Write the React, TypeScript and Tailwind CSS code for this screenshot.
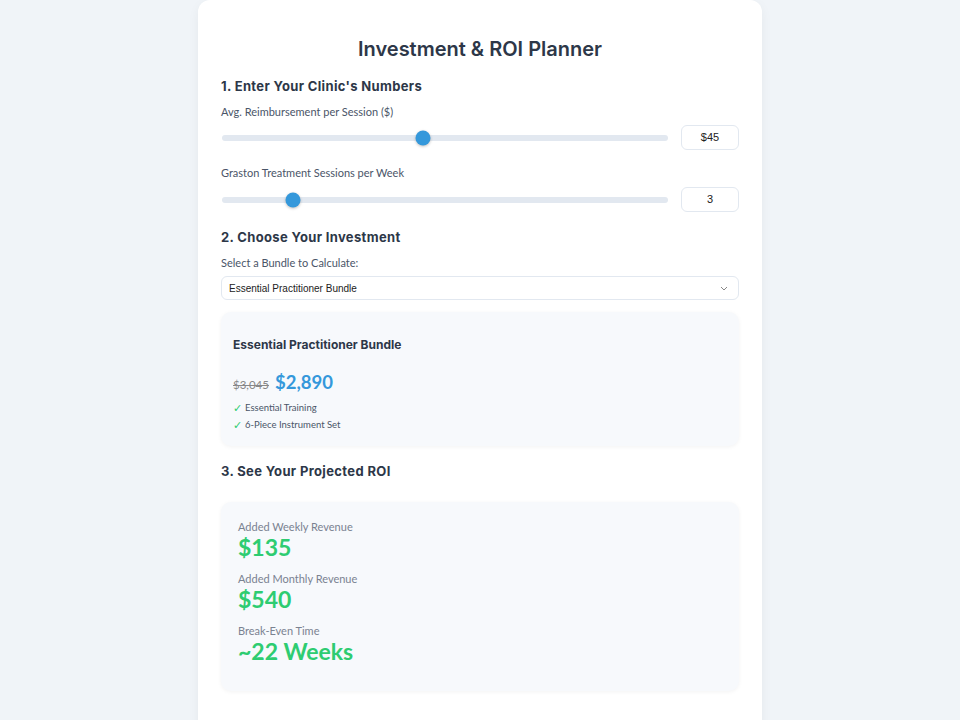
const head = { fontFamily: "Inter, 'Open Sans', sans-serif" };
const body = { fontFamily: "Lato, 'Noto Sans', sans-serif" };
const arial = { fontFamily: "'Liberation Sans', Arial, sans-serif" };

const Slider = ({ pct, value }: { pct: number; value: string }) => (
  <div className="flex items-center gap-[13px]">
    <div className="relative flex-1 h-[6px] rounded-full bg-[#e2e8f0] ml-px">
      <div
        className="absolute top-1/2 w-[15px] h-[15px] -translate-x-1/2 -translate-y-1/2 rounded-full bg-[#3498db] shadow-[0_1px_3px_rgba(0,0,0,0.25)]"
        style={{ left: `${pct}%` }}
      />
    </div>
    <div
      className="w-[58px] h-[25px] flex items-center justify-center border border-[#e2e8f0] rounded-[6px] text-[11px] text-[#222]"
      style={arial}
    >
      {value}
    </div>
  </div>
);

const Check = ({ children }: { children: string }) => (
  <div className="flex items-center gap-[4px] h-[17px] text-[9.5px] text-[#4a5568]">
    <span className="text-[#2ecc71] text-[11px] w-[8px]">✓</span>
    <span>{children}</span>
  </div>
);

const Stat = ({ label, value }: { label: string; value: string }) => (
  <div>
    <div className="text-[11px] leading-[16px] text-[#7a8291]">{label}</div>
    <div className="text-[23px] leading-[24px] font-bold text-[#2ecc71]">{value}</div>
  </div>
);

export default function App() {
  return (
    <div className="min-h-[720px] bg-[#f0f4f8] flex justify-center" style={body}>
      <div className="w-[564px] bg-white rounded-t-[12px] shadow-[0_4px_12px_rgba(0,0,0,0.05)] px-[23px] pt-[35px] pb-[40px]">
        <h1 className="text-center text-[20px] leading-[28px] font-semibold text-[#2d3748]" style={head}>
          Investment &amp; ROI Planner
        </h1>

        <h2 className="mt-[14px] text-[13px] leading-[18px] font-bold tracking-[0.35px] text-[#2d3748]" style={head}>
          1. Enter Your Clinic's Numbers
        </h2>
        <div className="mt-[9px] text-[11px] leading-[16px] text-[#4a5568]">Avg. Reimbursement per Session ($)</div>
        <div className="mt-[5px]">
          <Slider pct={45} value="$45" />
        </div>
        <div className="mt-[15px] text-[11px] leading-[16px] text-[#4a5568]">Graston Treatment Sessions per Week</div>
        <div className="mt-[6px]">
          <Slider pct={16} value="3" />
        </div>

        <h2 className="mt-[16px] text-[13px] leading-[18px] font-bold tracking-[0.35px] text-[#2d3748]" style={head}>
          2. Choose Your Investment
        </h2>
        <div className="mt-[9px] text-[11px] leading-[16px] text-[#4a5568]">Select a Bundle to Calculate:</div>
        <div
          className="mt-[5px] h-[24px] flex items-center justify-between border border-[#e2e8f0] rounded-[6px] pl-[7px] pr-[10px] text-[10px] text-[#222]"
          style={arial}
        >
          <span>Essential Practitioner Bundle</span>
          <svg width="8" height="5" viewBox="0 0 8 5" fill="none" stroke="#888" strokeWidth="1">
            <path d="M1 1l3 3 3-3" />
          </svg>
        </div>

        <div className="mt-[12px] bg-[#f7f9fc] rounded-[10px] shadow-[0_1px_4px_rgba(0,0,0,0.05)] px-[12px] pt-[25px] pb-[12px]">
          <div className="text-[12px] leading-[16px] font-bold text-[#2d3748]" style={head}>
            Essential Practitioner Bundle
          </div>
          <div className="mt-[16px] flex items-baseline gap-[6px] h-[24px]">
            <span className="text-[11.5px] text-[#888] line-through">$3,045</span>
            <span className="text-[18.5px] font-bold text-[#3498db]">$2,890</span>
          </div>
          <div className="mt-[7px]">
            <Check>Essential Training</Check>
            <Check>6-Piece Instrument Set</Check>
          </div>
        </div>

        <h2 className="mt-[16px] text-[13px] leading-[18px] font-bold tracking-[0.35px] text-[#2d3748]" style={head}>
          3. See Your Projected ROI
        </h2>

        <div className="mt-[22px] bg-[#f7f9fc] rounded-[10px] shadow-[0_1px_4px_rgba(0,0,0,0.05)] px-[17px] pt-[17px] pb-[28px] flex flex-col gap-[12px]">
          <Stat label="Added Weekly Revenue" value="$135" />
          <Stat label="Added Monthly Revenue" value="$540" />
          <Stat label="Break-Even Time" value="~22 Weeks" />
        </div>
      </div>
    </div>
  );
}
